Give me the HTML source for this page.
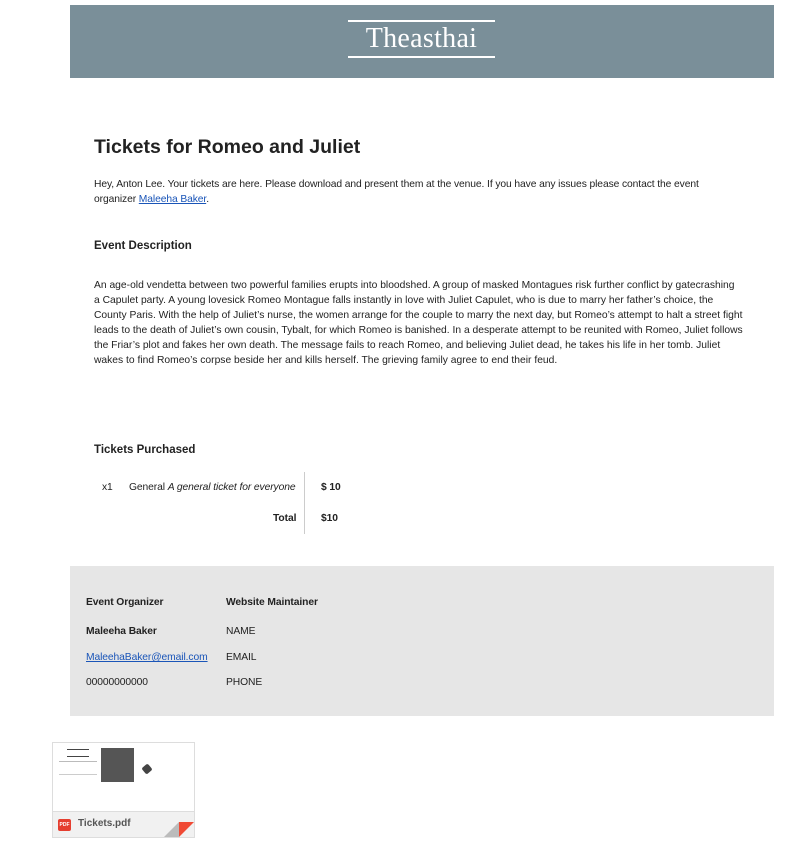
<!DOCTYPE html>
<html><head><meta charset="utf-8"><style>
body{margin:0;background:#fff;font-family:"Liberation Sans",sans-serif;color:#222;width:802px;height:850px;position:relative;overflow:hidden}
.a{position:absolute}
.hdr{left:70px;top:5px;width:704px;height:73px;background:#7a8f99}
.ln{position:absolute;left:278px;width:147px;height:2px;background:#fff}
.logo{position:absolute;left:278px;width:147px;top:18px;text-align:center;color:#fff;font-family:"Liberation Serif",serif;font-size:28px;letter-spacing:0.3px}
p{margin:0}
.t{font-size:10.3px;line-height:15px;letter-spacing:-0.1px}
a{color:#1a55b8}
.b{font-weight:bold}
</style></head><body>
<div class="a hdr"><div class="ln" style="top:15px"></div><div class="logo">Theasthai</div><div class="ln" style="top:51px"></div></div>
<div class="a b" style="left:94px;top:136px;font-size:19.5px">Tickets for Romeo and Juliet</div>
<p class="a t" style="left:94px;top:177px;width:630px">Hey, Anton Lee. Your tickets are here. Please download and present them at the venue. If you have any issues please contact the event organizer <a href="#">Maleeha Baker</a>.</p>
<div class="a b" style="left:94px;top:240px;font-size:11.5px">Event Description</div>
<p class="a t" style="left:94px;top:278px;width:655px;letter-spacing:0">An age-old vendetta between two powerful families erupts into bloodshed. A group of masked Montagues risk further conflict by gatecrashing<br>a Capulet party. A young lovesick Romeo Montague falls instantly in love with Juliet Capulet, who is due to marry her father’s choice, the<br>County Paris. With the help of Juliet’s nurse, the women arrange for the couple to marry the next day, but Romeo’s attempt to halt a street fight<br>leads to the death of Juliet’s own cousin, Tybalt, for which Romeo is banished. In a desperate attempt to be reunited with Romeo, Juliet follows<br>the Friar’s plot and fakes her own death. The message fails to reach Romeo, and believing Juliet dead, he takes his life in her tomb. Juliet<br>wakes to find Romeo’s corpse beside her and kills herself. The grieving family agree to end their feud.</p>
<div class="a b" style="left:94px;top:444px;font-size:11.5px">Tickets Purchased</div>
<div class="a t" style="left:102px;top:480px">x1</div>
<div class="a t" style="left:129px;top:480px">General <i>A general ticket for everyone</i></div>
<div class="a" style="left:304px;top:472px;width:1px;height:62px;background:#ccc"></div>
<div class="a t b" style="left:321px;top:480px">$ 10</div>
<div class="a t b" style="left:273px;top:511px">Total</div>
<div class="a t b" style="left:321px;top:511px">$10</div>
<div class="a" style="left:70px;top:566px;width:704px;height:150px;background:#e6e6e6"></div>
<div class="a t b" style="left:86px;top:595px">Event Organizer</div>
<div class="a t b" style="left:226px;top:595px">Website Maintainer</div>
<div class="a t b" style="left:86px;top:624px">Maleeha Baker</div>
<div class="a t" style="left:226px;top:624px">NAME</div>
<div class="a t" style="left:86px;top:650px"><a href="#">MaleehaBaker@email.com</a></div>
<div class="a t" style="left:226px;top:650px">EMAIL</div>
<div class="a t" style="left:86px;top:675px">00000000000</div>
<div class="a t" style="left:226px;top:675px">PHONE</div>
<div class="a" style="left:52px;top:742px;width:141px;height:94px;border:1px solid #ddd;background:#fff;overflow:hidden">
 <div class="a" style="left:48px;top:5px;width:33px;height:34px;background:#555"></div>
 <div class="a" style="left:14px;top:6px;width:22px;height:1px;background:#444"></div>
 <div class="a" style="left:14px;top:13px;width:22px;height:1px;background:#444"></div>
 <div class="a" style="left:6px;top:18px;width:38px;height:12px;border-top:1px solid #bbb;border-bottom:1px solid #ccc"></div>
 <div class="a" style="left:90px;top:22px;width:8px;height:8px;background:#444;border-radius:2px;transform:rotate(-40deg)"></div>
 <div class="a" style="left:0;top:68px;width:141px;height:26px;background:#f1f1f1;border-top:1px solid #ddd"></div>
 <div class="a" style="left:5px;top:76px;width:13px;height:12px;background:#e53e2f;border-radius:2px;color:#fff;font-size:5px;line-height:12px;text-align:center;font-weight:bold">PDF</div>
 <div class="a" style="left:25px;top:75px;font-size:10px;color:#555;font-weight:bold">Tickets.pdf</div>
 <div class="a" style="left:111px;top:79px;width:0;height:0;border-left:15px solid transparent;border-bottom:15px solid #bbb"></div>
 <div class="a" style="left:126px;top:79px;width:0;height:0;border-right:15px solid transparent;border-top:15px solid #f04a35"></div>
</div>
</body></html>
